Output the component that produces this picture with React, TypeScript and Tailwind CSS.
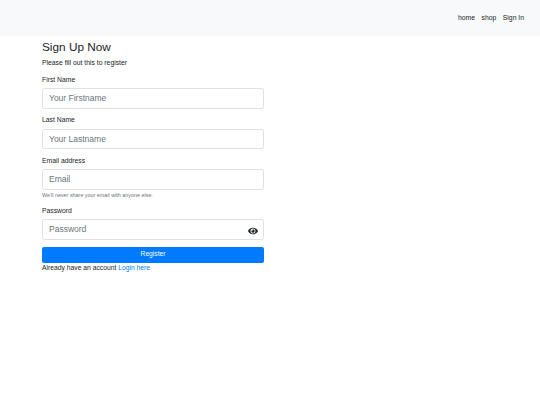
import { FaEye } from "react-icons/fa";

const fields = [
  { id: "first", label: "First Name", placeholder: "Your Firstname" },
  { id: "last", label: "Last Name", placeholder: "Your Lastname" },
];

const inputClass =
  "block h-[20.5px] w-full rounded-[2.5px] border border-[#dee2e6] bg-white px-[6px] text-[8.5px] leading-none text-[#495057] outline-none placeholder:text-[#6c757d]";

export default function App() {
  return (
    <div className="min-h-[405px] bg-white font-['Liberation_Sans',Arial,sans-serif] text-[#212529]">
      {/* Navbar */}
      <nav className="flex h-[36px] items-center justify-end gap-[6.5px] bg-[#f8f9fa] pr-[16px] text-[6.8px]">
        <a href="#">home</a>
        <a href="#">shop</a>
        <a href="#">Sign In</a>
      </nav>

      {/* Form */}
      <section className="ml-[42px] w-[222px]">
        <h1 className="pt-[3px] text-[11.8px] leading-[17px]">Sign Up Now</h1>
        <p className="mt-[1.5px] text-[6.8px] leading-[10px]">Please fill out this to register</p>

        <form className="mt-[7px]">
          {fields.map((f) => (
            <div key={f.id} className="mb-[6.5px]">
              <label htmlFor={f.id} className="mb-[3.5px] block text-[6.8px] leading-[10px]">
                {f.label}
              </label>
              <input id={f.id} placeholder={f.placeholder} className={inputClass} />
            </div>
          ))}

          <div className="mb-[6.5px]">
            <label htmlFor="email" className="mb-[3.5px] block text-[6.8px] leading-[10px]">
              Email address
            </label>
            <input id="email" placeholder="Email" className={inputClass} />
            <small className="mt-[1.5px] block text-[5.4px] leading-[8px] text-[#6c757d]">
              We'll never share your email with anyone else.
            </small>
          </div>

          <div className="mb-[7px]">
            <label htmlFor="password" className="mb-[3.5px] block text-[6.8px] leading-[10px]">
              Password
            </label>
            <div className="relative">
              <input id="password" placeholder="Password" className={inputClass} />
              <FaEye className="absolute right-[6px] top-[7px] h-[10px] w-[10px] text-[#212529]" />
            </div>
          </div>

          <button
            type="button"
            className="block h-[16px] w-full rounded-[2px] bg-[#007bff] text-center text-[6.7px] text-white"
          >
            Register
          </button>
        </form>

        <p className="text-[6.75px] leading-[10px]">
          Already have an account <a href="#" className="text-[#007bff]">Login here</a>
        </p>
      </section>
    </div>
  );
}
